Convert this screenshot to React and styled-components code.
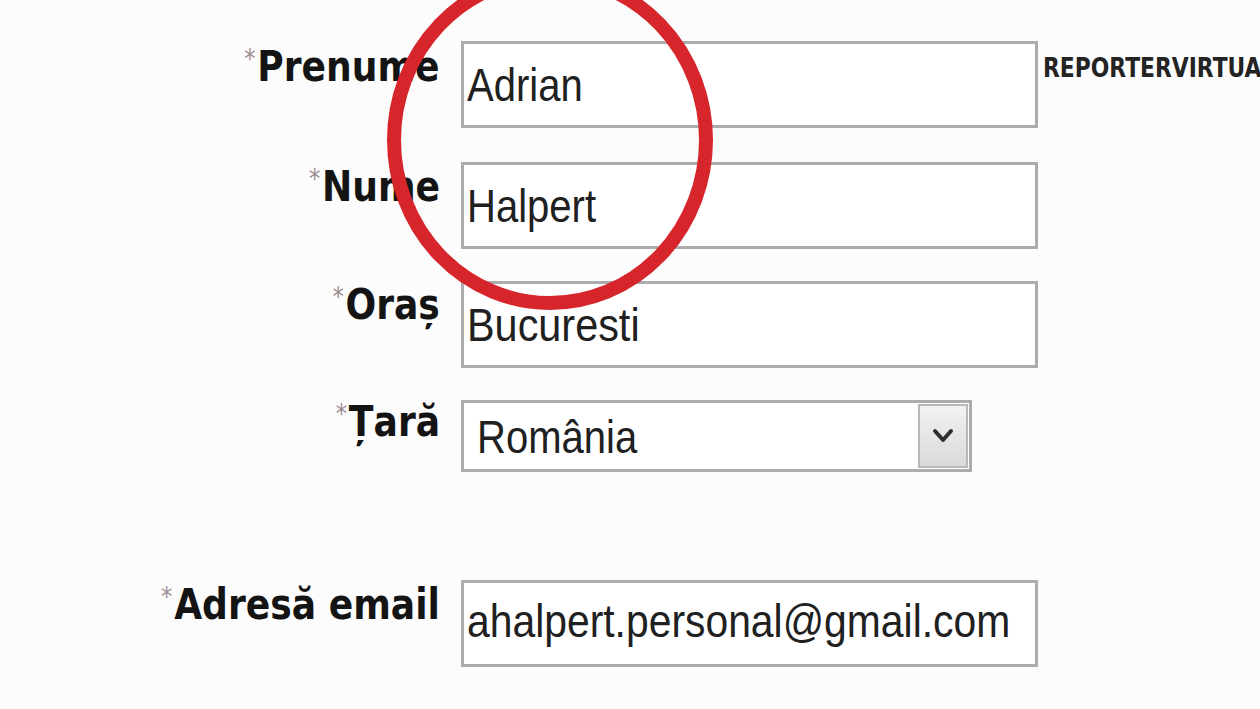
import React from "react";
import styled, { createGlobalStyle } from "styled-components";

const Global = createGlobalStyle`
  html, body {
    margin: 0;
    padding: 0;
    background: #fcfcfc;
    overflow: hidden;
  }
`;

const Page = styled.div`
  position: relative;
  width: 1260px;
  height: 709px;
  overflow: hidden;
  background: #fcfcfc;
  box-sizing: border-box;
  padding-top: 41px;
  display: flex;
  flex-direction: column;
`;

const Row = styled.div`
  display: flex;
  align-items: flex-start;
  margin-top: ${(p) => p.$gap || 0}px;
`;

const Label = styled.div`
  width: 440px;
  flex-shrink: 0;
  text-align: right;
  padding-top: ${(p) => p.$top}px;
  box-sizing: border-box;
`;

const LabelText = styled.span`
  display: inline-block;
  white-space: nowrap;
  font-family: "DejaVu Sans", Verdana, sans-serif;
  font-weight: bold;
  font-size: 43px;
  line-height: 43px;
  color: #141414;
  transform: scaleX(0.84);
  transform-origin: right top;
`;

const Asterisk = styled.span`
  display: inline-block;
  vertical-align: top;
  font-size: 27px;
  line-height: 27px;
  font-weight: normal;
  color: #9c8b90;
  margin-right: 2px;
`;

const Field = styled.div`
  margin-left: 21px;
  width: 577px;
  height: 87px;
  box-sizing: border-box;
  border: 3px solid #acacac;
  background: #ffffff;
  padding: ${(p) => p.$pt ?? 18}px 0 0 3px;
  flex-shrink: 0;
`;

const SelectBox = styled.div`
  margin-left: 21px;
  width: 511px;
  height: 72px;
  box-sizing: border-box;
  border: 3px solid #acacac;
  background: #ffffff;
  display: flex;
  align-items: stretch;
  flex-shrink: 0;
`;

const SelectValue = styled.div`
  flex: 1;
  padding: 11px 0 0 13px;
`;

const ArrowButton = styled.div`
  width: 50px;
  margin: 1px;
  border: 2px solid #b8b8b8;
  background: linear-gradient(#f2f2f2, #dadada);
  display: flex;
  align-items: center;
  justify-content: center;
  box-sizing: border-box;
`;

const Value = styled.span`
  display: inline-block;
  white-space: nowrap;
  font-family: "Liberation Sans", Arial, sans-serif;
  font-size: 46px;
  line-height: 46px;
  color: #202020;
  transform: scaleX(${(p) => p.$sx || 0.87});
  transform-origin: left top;
`;

const Watermark = styled.div`
  margin-left: 5px;
  margin-top: 14px;
  white-space: nowrap;
  font-family: "DejaVu Sans", sans-serif;
  font-weight: bold;
  font-size: 26px;
  line-height: 26px;
  color: #232323;
  transform: scaleX(0.84);
  transform-origin: left top;
`;

const Overlay = styled.svg`
  position: absolute;
  left: 0;
  top: 0;
  width: 1260px;
  height: 709px;
  pointer-events: none;
`;

function FormLabel({ text, top }) {
  return (
    <Label $top={top}>
      <LabelText>
        <Asterisk>*</Asterisk>
        {text}
      </LabelText>
    </Label>
  );
}

export default function App() {
  return (
    <Page>
      <Global />
      <Row>
        <FormLabel text="Prenume" top={4} />
        <Field>
          <Value>Adrian</Value>
        </Field>
        <Watermark>REPORTERVIRTUAL.RO</Watermark>
      </Row>
      <Row $gap={34}>
        <FormLabel text="Nume" top={3} />
        <Field>
          <Value>Halpert</Value>
        </Field>
      </Row>
      <Row $gap={32}>
        <FormLabel text="Oraș" top={2} />
        <Field>
          <Value $sx={0.9}>Bucuresti</Value>
        </Field>
      </Row>
      <Row $gap={32}>
        <FormLabel text="Țară" top={0} />
        <SelectBox>
          <SelectValue>
            <Value>România</Value>
          </SelectValue>
          <ArrowButton>
            <svg width="24" height="18" viewBox="0 0 24 18">
              <polyline
                points="4,4 12,13 20,4"
                fill="none"
                stroke="#2e2e2e"
                strokeWidth="4"
                strokeLinecap="round"
                strokeLinejoin="round"
              />
            </svg>
          </ArrowButton>
        </SelectBox>
      </Row>
      <Row $gap={108}>
        <FormLabel text="Adresă email" top={3} />
        <Field $pt={15}>
          <Value $sx={0.888}>ahalpert.personal@gmail.com</Value>
        </Field>
      </Row>
      <Overlay viewBox="0 0 1260 709">
        <ellipse
          cx="550"
          cy="140"
          rx="156"
          ry="163"
          fill="none"
          stroke="#d6262c"
          strokeWidth="14"
        />
      </Overlay>
    </Page>
  );
}
